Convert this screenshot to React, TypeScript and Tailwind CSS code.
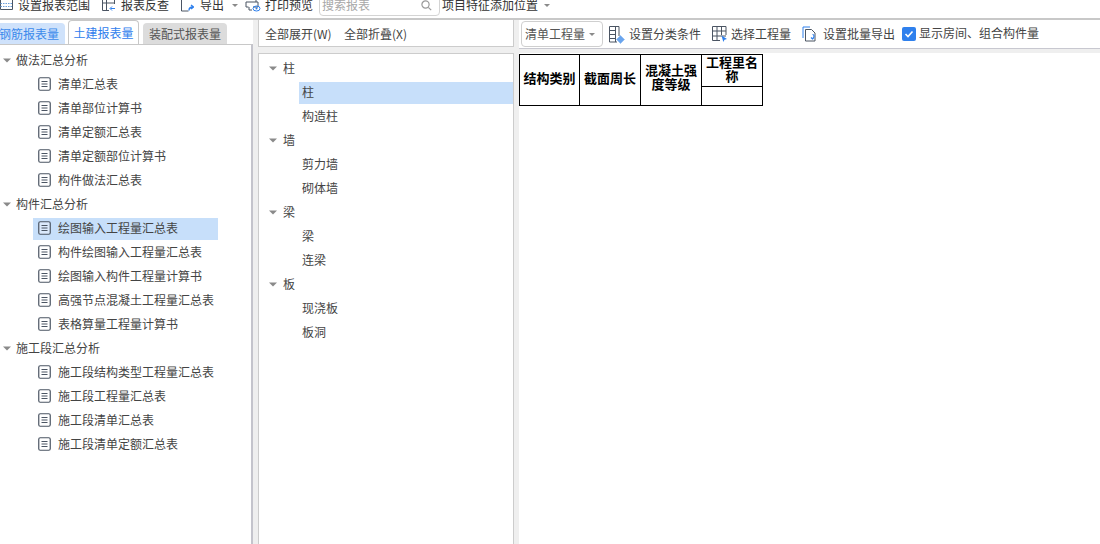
const font = { fontFamily: '"Noto Sans CJK SC", "Liberation Sans", sans-serif' };

const Caret = ({ className = "" }: { className?: string }) => (
  <svg width="8" height="5" viewBox="0 0 8 5" className={`shrink-0 ${className}`}>
    <path d="M0 0.5H8L4 4.5Z" fill="#8a8a8a" />
  </svg>
);

const DocIcon = ({ active = false }: { active?: boolean }) => (
  <svg width="13" height="14" viewBox="0 0 13 14" className="shrink-0">
    <rect x="0.75" y="0.75" width="11.5" height="12.5" rx="1.5" fill={active ? "#dbe9fb" : "none"} stroke="#4b5563" strokeWidth="1.2" />
    <path d="M3.5 4.5H9.5M3.5 7H9.5M3.5 9.5H9.5" stroke="#4b5563" strokeWidth="1.1" />
  </svg>
);

const GridIcon = () => (
  <svg width="14" height="14" viewBox="0 0 14 14" className="shrink-0" fill="none" stroke="#4b5563">
    <path d="M0.5 1.5V11.5H12.5V1.5" />
    <path d="M0.5 5.5H12.5M0.5 8.5H12.5" stroke="#6d9fdc" strokeDasharray="1.5 1" />
  </svg>
);

const BackIcon = () => (
  <svg width="15" height="14" viewBox="0 0 15 14" className="shrink-0" fill="none" stroke="#4b5563">
    <path d="M8 12.5H1.5V1.5H13.5V6M1.5 5H13.5M5.5 1.5V12.5" />
    <path d="M14 10.5H9.5M11 8.5L9 10.5L11 12.5" stroke="#2f80ed" />
  </svg>
);

const ExportIcon = () => (
  <svg width="14" height="14" viewBox="0 0 14 14" className="shrink-0" fill="none" stroke="#4b5563">
    <path d="M5 1H1.5V13H8.5" />
    <path d="M9 12.5C9 10 10.5 9 13 9M11 7L13.5 9L11 11" stroke="#2f80ed" strokeWidth="1.4" />
  </svg>
);

const PrintIcon = () => (
  <svg width="16" height="14" viewBox="0 0 16 14" className="shrink-0" fill="none" stroke="#4b5563">
    <path d="M4 1.5H11V4M1 4H13V9H8M3.5 9H1V4M4 9V12H7" />
    <ellipse cx="11.5" cy="10.5" rx="3.5" ry="2.5" stroke="#2f80ed" />
    <circle cx="11.5" cy="10.5" r="1" fill="#2f80ed" stroke="none" />
  </svg>
);

const FilterIcon = () => (
  <svg width="17" height="19" viewBox="0 0 17 19" className="shrink-0" fill="none" stroke="#4b5563">
    <path d="M9 17H1.5V1.5H11V11M7.5 1.5V17M1.5 5.5H7.5M1.5 9.5H7.5M1.5 13.5H7.5" />
    <path d="M12.5 10.5L16.5 14.5L12.5 18.5L8.5 14.5Z" fill="#6aa5ee" stroke="#9cc3f3" />
  </svg>
);

const PickIcon = () => (
  <svg width="17" height="18" viewBox="0 0 17 18" className="shrink-0" fill="none" stroke="#4b5563">
    <path d="M9 15.5H1.5V1.5H15V10M1.5 6H15M1.5 11H15M6 1.5V15.5M10.5 1.5V10" />
    <path d="M10.5 10.5L16 14L13.5 14.7L12.3 17Z" fill="#2f80ed" stroke="none" />
  </svg>
);

const BatchIcon = () => (
  <svg width="16" height="16" viewBox="0 0 16 16" className="shrink-0" fill="none" stroke="#4b5563">
    <path d="M1 12V1H8" stroke="#2f80ed" />
    <path d="M3.5 3.5H9.5L13 7V15H3.5Z" />
    <path d="M10.5 8.5C12.5 8.5 12.5 12 10.5 12.5M9 11.5L10.5 13L12 12" stroke="#2f80ed" strokeWidth="1.2" />
  </svg>
);

const groups = [
  { name: "做法汇总分析", items: ["清单汇总表", "清单部位计算书", "清单定额汇总表", "清单定额部位计算书", "构件做法汇总表"] },
  { name: "构件汇总分析", items: ["绘图输入工程量汇总表", "构件绘图输入工程量汇总表", "绘图输入构件工程量计算书", "高强节点混凝土工程量汇总表", "表格算量工程量计算书"] },
  { name: "施工段汇总分析", items: ["施工段结构类型工程量汇总表", "施工段工程量汇总表", "施工段清单汇总表", "施工段清单定额汇总表"] },
];

const cats = [
  { name: "柱", items: ["柱", "构造柱"] },
  { name: "墙", items: ["剪力墙", "砌体墙"] },
  { name: "梁", items: ["梁", "连梁"] },
  { name: "板", items: ["现浇板", "板洞"] },
];

const cellHead = "border-r border-black flex items-center justify-center text-center font-bold text-[13px] leading-[14px] text-black";

export default function App() {
  return (
    <div className="w-[1100px] h-[544px] overflow-hidden bg-[#efefef] flex flex-col text-[12px] text-[#444]" style={font}>
      {/* top toolbar */}
      <div className="h-[20px] shrink-0 bg-white overflow-hidden">
        <div className="h-[18px] overflow-hidden">
          <div className="h-[10px] flex items-center whitespace-nowrap">
            <div className="w-[18px] shrink-0"><GridIcon /></div>
            <span className="w-[83px] shrink-0 text-[#333]">设置报表范围</span>
            <BackIcon />
            <span className="ml-[5px] w-[59px] shrink-0 text-[#333]">报表反查</span>
            <ExportIcon />
            <span className="ml-[6px] w-[31px] shrink-0 text-[#333]">导出</span>
            <Caret className="scale-75" />
            <div className="w-[6px] shrink-0" />
            <PrintIcon />
            <span className="ml-[4px] w-[54px] shrink-0 text-[#333]">打印预览</span>
            <div className="w-[121px] h-[22px] shrink-0 border border-[#d4d4d4] rounded flex items-center justify-between pl-[2px] pr-[7px] text-[#a8a8a8]">
              <span>搜索报表</span>
              <svg width="11" height="11" viewBox="0 0 11 11" fill="none" stroke="#999" strokeWidth="1.2">
                <circle cx="4.5" cy="4.5" r="3.6" />
                <path d="M7.3 7.3L10.2 10.2" />
              </svg>
            </div>
            <span className="ml-[2px] w-[101px] shrink-0 text-[#333]">项目特征添加位置</span>
            <Caret className="scale-75" />
          </div>
        </div>
        <div className="h-[2px] bg-[#c8c8c8]" />
      </div>

      <div className="flex-1 flex min-h-0">
        {/* left */}
        <div className="w-[253px] shrink-0 flex flex-col">
          <div className="h-[24px] shrink-0 flex items-end bg-white pr-[2px] whitespace-nowrap">
            <div className="h-[21px] w-[65px] shrink-0 bg-[#cfe2fb] text-[#3b8aeb] rounded-tr flex items-center justify-end pr-[6px] overflow-hidden">钢筋报表量</div>
            <div className="ml-[3px] h-[24px] w-[71px] shrink-0 bg-white border border-b-0 border-[#c8c8c8] rounded-t text-[#2f80ed] flex items-center justify-center">土建报表量</div>
            <div className="ml-[4px] h-[21px] w-[84px] shrink-0 bg-[#dcdcdc] text-[#555] rounded-t flex items-center justify-center">装配式报表量</div>
          </div>
          <div className="flex-1 bg-white border-t border-[#c8c8c8] border-r-2 border-r-[#c4c4cc] pt-[5px]">
            {groups.map((g) => (
              <div key={g.name}>
                <div className="h-[22px] mb-[2px] pb-[2px] flex items-center pl-[3px]">
                  <Caret />
                  <span className="ml-[5px]">{g.name}</span>
                </div>
                {g.items.map((it) => {
                  const active = it === "绘图输入工程量汇总表";
                  return (
                    <div key={it} className={`ml-[33px] w-[185px] h-[22px] mb-[2px] pb-[2px] pl-[5px] flex items-center ${active ? "bg-[#c7dffa]" : ""}`}>
                      <DocIcon active={active} />
                      <span className="ml-[7px] whitespace-nowrap">{it}</span>
                    </div>
                  );
                })}
              </div>
            ))}
          </div>
        </div>

        {/* middle */}
        <div className="ml-[5px] w-[256px] shrink-0 flex flex-col">
          <div className="h-[27px] shrink-0 bg-white border-x border-b border-[#cccccc] flex items-center pl-[6px] pt-px gap-[11px]">
            <span className="w-[68px] whitespace-nowrap">全部展开(W)</span>
            <span className="whitespace-nowrap">全部折叠(X)</span>
          </div>
          <div className="mt-[6px] flex-1 bg-white border border-b-0 border-[#cccccc] pt-[4px]">
            {cats.map((c) => (
              <div key={c.name}>
                <div className="h-[22px] mb-[2px] pb-[2px] flex items-center pl-[10px]">
                  <Caret />
                  <span className="ml-[6px]">{c.name}</span>
                </div>
                {c.items.map((it, i) => (
                  <div key={it} className={`ml-[40px] h-[22px] mb-[2px] pb-[2px] pl-[3px] flex items-center ${c.name === "柱" && i === 0 ? "bg-[#c7dffa]" : ""}`}>
                    {it}
                  </div>
                ))}
              </div>
            ))}
          </div>
        </div>

        {/* right */}
        <div className="ml-[5px] flex-1 flex flex-col min-w-0">
          <div className="h-[29px] shrink-0 bg-white border-b border-[#c8c8d0] flex items-center pl-[2px] whitespace-nowrap">
            <div className="h-[26px] w-[82px] shrink-0 border border-[#cfcfcf] rounded-[4px] flex items-center justify-between pl-[3px] pr-[6px] text-[#555]">
              <span>清单工程量</span>
              <Caret className="scale-75" />
            </div>
            <div className="ml-[5px]"><FilterIcon /></div>
            <span className="ml-[4px]">设置分类条件</span>
            <div className="ml-[10px]"><PickIcon /></div>
            <span className="ml-[3px]">选择工程量</span>
            <div className="ml-[11px]"><BatchIcon /></div>
            <span className="ml-[5px]">设置批量导出</span>
            <div className="ml-[7px] w-[14px] h-[14px] shrink-0 rounded-[2px] bg-[#2f80ed] flex items-center justify-center -mt-[1px]">
              <svg width="10" height="10" viewBox="0 0 10 10" fill="none" stroke="#fff" strokeWidth="1.6">
                <path d="M1.5 5L4 7.5L8.5 2.5" />
              </svg>
            </div>
            <span className="ml-[3px] -mt-[2px]">显示房间、组合构件量</span>
          </div>
          <div className="mt-[4px] flex-1 bg-white pt-px">
            <div className="w-[244px] h-[52px] border border-black flex">
              <div className={`w-[60px] pb-[4px] ${cellHead}`}>结构类别</div>
              <div className={`w-[61px] pb-[4px] ${cellHead}`}>截面周长</div>
              <div className={`w-[61px] pb-[6px] ${cellHead}`}>混凝土强<br />度等级</div>
              <div className="flex-1 flex flex-col">
                <div className="h-[32px] border-b border-black flex items-center justify-center text-center font-bold text-[13px] leading-[14px] pb-[3px] text-black">工程里名<br />称</div>
              </div>
            </div>
          </div>
        </div>
      </div>
    </div>
  );
}
